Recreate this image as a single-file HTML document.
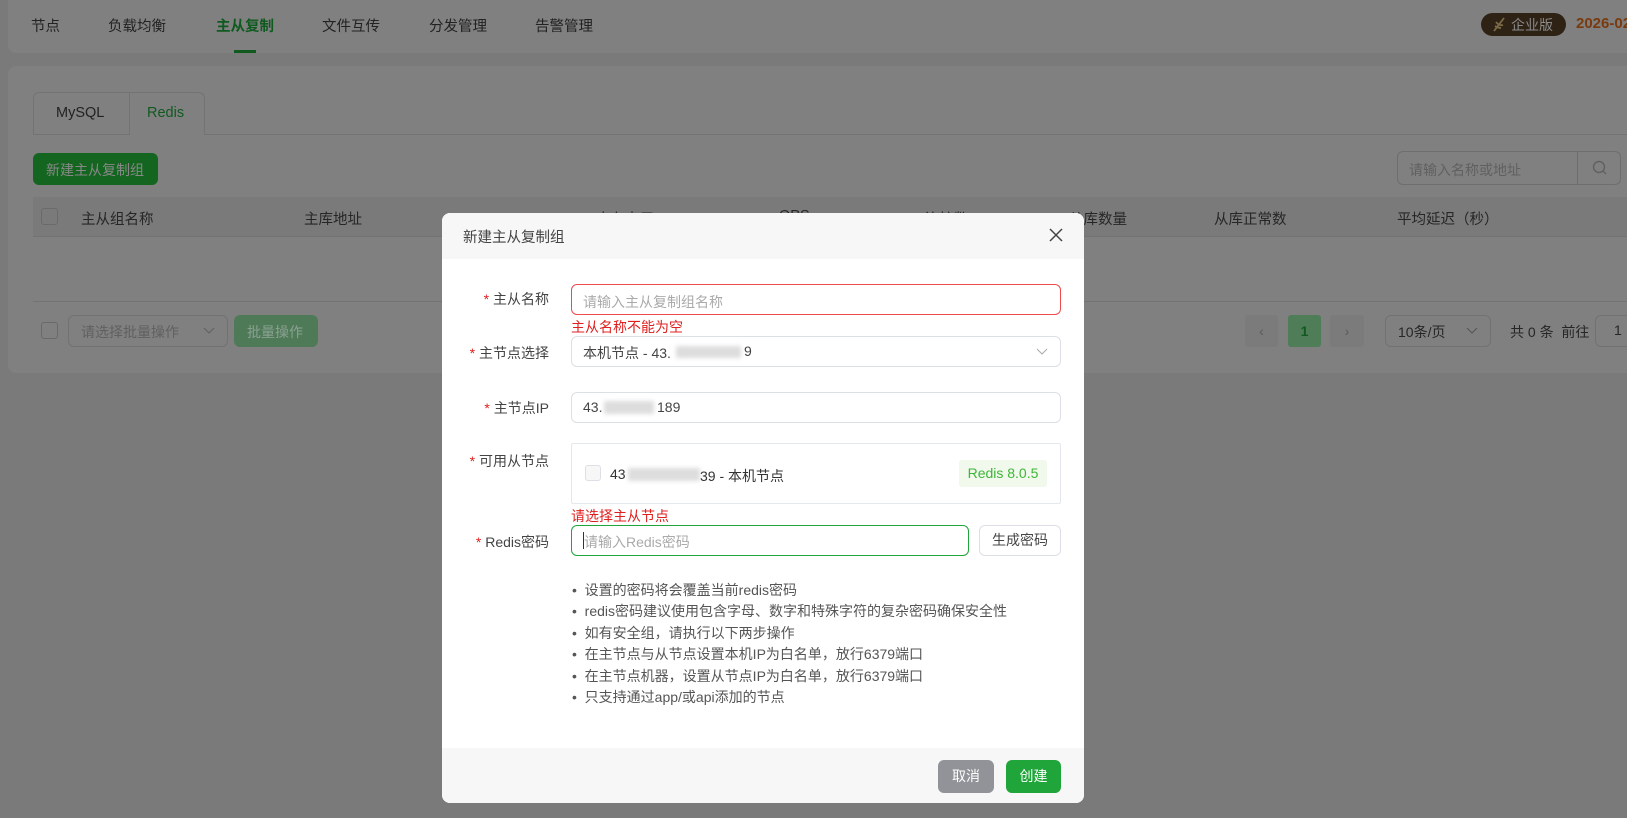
<!DOCTYPE html>
<html><head><meta charset="utf-8"><style>
*{box-sizing:border-box;margin:0;padding:0}
body{width:1627px;height:818px;overflow:hidden;background:#7a7a7a;font-family:"Liberation Sans","Noto Sans CJK SC",sans-serif;font-size:14px;position:relative;color:#1e1e1e}
.a{position:absolute;white-space:nowrap}
.blur{position:absolute;background:#ddd;filter:blur(2px)}
</style></head><body>
<div class="a" style="left:8px;top:0;width:1640px;height:53px;background:#808080;border-radius:0 0 8px 8px"></div>
<div class="a" style="left:31px;top:15px;font-size:14.5px;color:#222">节点</div>
<div class="a" style="left:108px;top:15px;font-size:14.5px;color:#222">负载均衡</div>
<div class="a" style="left:216px;top:15px;font-size:14.5px;color:#0f5a1f;font-weight:bold">主从复制</div>
<div class="a" style="left:234px;top:50px;width:22px;height:3px;background:#105a20"></div>
<div class="a" style="left:322px;top:15px;font-size:14.5px;color:#222">文件互传</div>
<div class="a" style="left:429px;top:15px;font-size:14.5px;color:#222">分发管理</div>
<div class="a" style="left:535px;top:15px;font-size:14.5px;color:#222">告警管理</div>
<div class="a" style="left:1481px;top:13px;width:85px;height:23px;border-radius:12px;background:#2e2215"></div>
<svg class="a" style="left:1491px;top:16px" width="16" height="17" viewBox="0 0 16 17"><path d="M3 15 L13 2 M5 6 Q8 10 12 9 M4 10 Q7 12 10 12" stroke="#7a6a48" stroke-width="1.8" fill="none"/></svg>
<div class="a" style="left:1511px;top:15px;font-size:14px;color:#8a8a8a">企业版</div>
<div class="a" style="left:1576px;top:15px;font-size:15px;color:#7a3a0e;font-weight:bold">2026-02</div>
<div class="a" style="left:8px;top:66px;width:1640px;height:307px;background:#808080;border-radius:8px"></div>
<div class="a" style="left:33px;top:92px;width:172px;height:43px;border:1px solid #737373;border-bottom:none;border-radius:6px 6px 0 0"></div>
<div class="a" style="left:129px;top:92px;width:1px;height:43px;background:#737373"></div>
<div class="a" style="left:205px;top:134px;width:1430px;height:1px;background:#737373"></div>
<div class="a" style="left:33px;top:134px;width:96px;height:1px;background:#737373"></div>
<div class="a" style="left:56px;top:105px;font-size:14.5px;color:#222">MySQL</div>
<div class="a" style="left:147px;top:105px;font-size:14.5px;color:#105a20">Redis</div>
<div class="a" style="left:33px;top:153px;width:125px;height:32px;background:#14651f;border-radius:6px"></div>
<div class="a" style="left:46px;top:160px;font-size:14px;color:#888">新建主从复制组</div>
<div class="a" style="left:1397px;top:151px;width:224px;height:34px;border:1px solid #6e6e6e;border-radius:6px"></div>
<div class="a" style="left:1577px;top:151px;width:1px;height:34px;background:#6e6e6e"></div>
<div class="a" style="left:1409px;top:160px;font-size:14px;color:#606060">请输入名称或地址</div>
<svg class="a" style="left:1592px;top:160px" width="16" height="16" viewBox="0 0 16 16"><circle cx="7" cy="7" r="5.5" stroke="#606060" stroke-width="1.4" fill="none"/><path d="M11 11 L14 14" stroke="#606060" stroke-width="1.4"/></svg>
<div class="a" style="left:33px;top:197px;width:1610px;height:40px;background:#7a7a7a;border-bottom:1px solid #737373"></div>
<div class="a" style="left:41px;top:208px;width:17px;height:17px;border:1px solid #6a6a6a;border-radius:3px"></div>
<div class="a" style="left:81px;top:208px;color:#262626;font-size:14.5px">主从组名称</div>
<div class="a" style="left:304px;top:208px;color:#262626;font-size:14.5px">主库地址</div>
<div class="a" style="left:596px;top:208px;color:#262626;font-size:14.5px">内存占用</div>
<div class="a" style="left:779px;top:208px;color:#262626;font-size:14.5px">QPS</div>
<div class="a" style="left:925px;top:208px;color:#262626;font-size:14.5px">连接数</div>
<div class="a" style="left:1069px;top:208px;color:#262626;font-size:14.5px">从库数量</div>
<div class="a" style="left:1214px;top:208px;color:#262626;font-size:14.5px">从库正常数</div>
<div class="a" style="left:1397px;top:208px;color:#262626;font-size:14.5px">平均延迟（秒）</div>
<div class="a" style="left:33px;top:301px;width:1610px;height:1px;background:#737373"></div>
<div class="a" style="left:41px;top:322px;width:17px;height:17px;border:1px solid #6a6a6a;border-radius:3px"></div>
<div class="a" style="left:68px;top:315px;width:160px;height:32px;border:1px solid #727272;border-radius:6px"></div>
<div class="a" style="left:81px;top:322px;color:#606060">请选择批量操作</div>
<svg class="a" style="left:203px;top:327px" width="12" height="8" viewBox="0 0 12 8"><path d="M1 1 L6 6 L11 1" stroke="#606060" fill="none"/></svg>
<div class="a" style="left:234px;top:315px;width:84px;height:32px;background:#4f7a58;border-radius:6px"></div>
<div class="a" style="left:247px;top:322px;color:#8aa190">批量操作</div>
<div class="a" style="left:1245px;top:315px;width:33px;height:32px;background:#7b7b7b;border-radius:3px;color:#5a5a5a;text-align:center;line-height:32px">‹</div>
<div class="a" style="left:1288px;top:315px;width:33px;height:32px;background:#4e7d58;border-radius:3px;color:#105a20;text-align:center;line-height:32px;font-weight:bold">1</div>
<div class="a" style="left:1330px;top:315px;width:34px;height:32px;background:#7b7b7b;border-radius:3px;color:#5a5a5a;text-align:center;line-height:32px">›</div>
<div class="a" style="left:1385px;top:315px;width:106px;height:32px;border:1px solid #727272;border-radius:6px"></div>
<div class="a" style="left:1398px;top:322px;color:#262626">10条/页</div>
<svg class="a" style="left:1466px;top:327px" width="12" height="8" viewBox="0 0 12 8"><path d="M1 1 L6 6 L11 1" stroke="#555" fill="none"/></svg>
<div class="a" style="left:1510px;top:322px;color:#262626">共 0 条&nbsp; 前往</div>
<div class="a" style="left:1595px;top:315px;width:50px;height:32px;border:1px solid #727272;border-radius:6px"></div>
<div class="a" style="left:1614px;top:322px;color:#262626">1</div>
<div class="a" style="left:442px;top:213px;width:642px;height:590px;background:#fff;border-radius:8px;overflow:hidden">
 <div style="position:absolute;left:0;top:0;width:100%;height:46px;background:#f7f7f7"></div>
 <div style="position:absolute;left:0;bottom:0;width:100%;height:55px;background:#f7f7f7"></div>
</div>
<div class="a" style="left:463px;top:226px;color:#444;font-size:14.5px">新建主从复制组</div>
<svg class="a" style="left:1049px;top:228px" width="14" height="14" viewBox="0 0 14 14"><path d="M1 1 L13 13 M13 1 L1 13" stroke="#444" stroke-width="1.5"/></svg>
<div class="a" style="left:470px;top:289px;width:79px;text-align:right;color:#444"><span style="color:#e02020">*</span> 主从名称</div>
<div class="a" style="left:450px;top:343px;width:99px;text-align:right;color:#444"><span style="color:#e02020">*</span> 主节点选择</div>
<div class="a" style="left:470px;top:398px;width:79px;text-align:right;color:#444"><span style="color:#e02020">*</span> 主节点IP</div>
<div class="a" style="left:450px;top:451px;width:99px;text-align:right;color:#444"><span style="color:#e02020">*</span> 可用从节点</div>
<div class="a" style="left:450px;top:532px;width:99px;text-align:right;color:#444"><span style="color:#e02020">*</span> Redis密码</div>
<div class="a" style="left:571px;top:284px;width:490px;height:31px;border:1px solid #ef4b4b;border-radius:6px"></div>
<div class="a" style="left:583px;top:292px;color:#aaa">请输入主从复制组名称</div>
<div class="a" style="left:571px;top:317px;color:#e02020">主从名称不能为空</div>
<div class="a" style="left:571px;top:336px;width:490px;height:31px;border:1px solid #dcdfe6;border-radius:6px"></div>
<div class="a" style="left:583px;top:343px;color:#444">本机节点 - 43.</div>
<div class="blur" style="left:676px;top:346px;width:65px;height:12px"></div>
<div class="a" style="left:744px;top:343px;color:#444">9</div>
<svg class="a" style="left:1036px;top:348px" width="12" height="8" viewBox="0 0 12 8"><path d="M1 1 L6 6 L11 1" stroke="#aaa" fill="none"/></svg>
<div class="a" style="left:571px;top:392px;width:490px;height:31px;border:1px solid #dcdfe6;border-radius:6px"></div>
<div class="a" style="left:583px;top:399px;color:#444">43.</div>
<div class="blur" style="left:604px;top:401px;width:50px;height:13px"></div>
<div class="a" style="left:657px;top:399px;color:#444">189</div>
<div class="a" style="left:571px;top:443px;width:490px;height:61px;border:1px solid #e4e7ed;border-radius:2px"></div>
<div class="a" style="left:585px;top:465px;width:16px;height:16px;border:1px solid #dcdfe6;border-radius:3px;background:#f7f7f7"></div>
<div class="a" style="left:610px;top:466px;color:#333">43</div>
<div class="blur" style="left:628px;top:468px;width:72px;height:13px"></div>
<div class="a" style="left:700px;top:466px;color:#333">39 - 本机节点</div>
<div class="a" style="left:959px;top:460px;width:88px;height:27px;background:#f0f9eb;border-radius:3px;color:#3fb53a;text-align:center;line-height:27px">Redis 8.0.5</div>
<div class="a" style="left:571px;top:506px;color:#e02020">请选择主从节点</div>
<div class="a" style="left:571px;top:525px;width:398px;height:31px;border:1px solid #20a53a;border-radius:6px"></div>
<div class="a" style="left:583px;top:532px;width:1px;height:17px;background:#333"></div>
<div class="a" style="left:584px;top:532px;color:#aaa">请输入Redis密码</div>
<div class="a" style="left:979px;top:525px;width:82px;height:31px;border:1px solid #dcdfe6;border-radius:6px;color:#444;text-align:center;line-height:29px">生成密码</div>
<div class="a" style="left:572px;top:580px;color:#555;line-height:21.4px;font-size:14px">
• &nbsp;设置的密码将会覆盖当前redis密码<br>
• &nbsp;redis密码建议使用包含字母、数字和特殊字符的复杂密码确保安全性<br>
• &nbsp;如有安全组，请执行以下两步操作<br>
• &nbsp;在主节点与从节点设置本机IP为白名单，放行6379端口<br>
• &nbsp;在主节点机器，设置从节点IP为白名单，放行6379端口<br>
• &nbsp;只支持通过app/或api添加的节点</div>
<div class="a" style="left:938px;top:760px;width:56px;height:33px;background:#919398;border-radius:6px;color:#fff;text-align:center;line-height:33px">取消</div>
<div class="a" style="left:1006px;top:760px;width:55px;height:33px;background:#20a53a;border-radius:6px;color:#fff;text-align:center;line-height:33px">创建</div>
</body></html>
